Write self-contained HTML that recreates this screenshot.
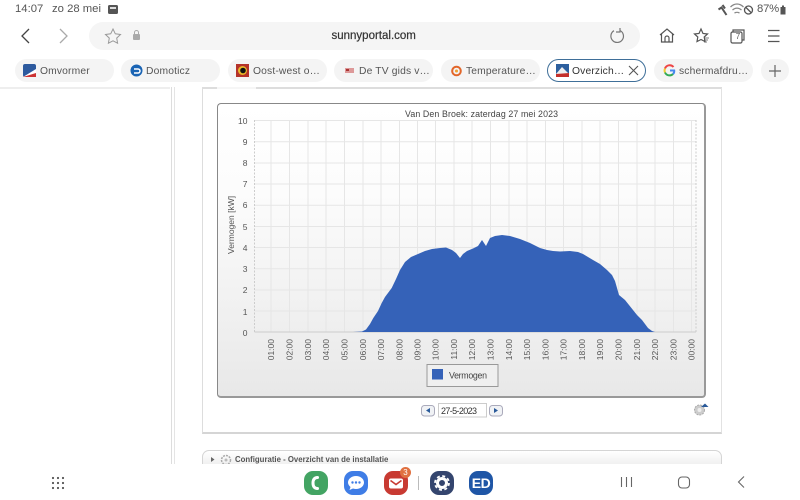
<!DOCTYPE html>
<html><head><meta charset="utf-8"><style>
html,body{margin:0;padding:0;width:800px;height:500px;overflow:hidden;background:#fff;font-family:"Liberation Sans",sans-serif;color:#444}
body{filter:blur(.3px)}
.a{position:absolute}
.tab{position:absolute;top:59px;width:99px;height:23px;border-radius:12px;background:#f4f4f4;font-size:10.300px;line-height:23px;color:#555;white-space:nowrap;box-sizing:border-box}
.tab span{position:absolute;left:25px;top:0;letter-spacing:.15px}
.tab svg{position:absolute;left:8px;top:5px}
.dock{position:absolute;top:471px;width:24px;height:24px;border-radius:9px}
</style></head><body>
<div class="a" style="left:15px;top:3px;font-size:11.300px;color:#555">14:07</div>
<div class="a" style="left:52px;top:3px;font-size:11.300px;color:#555">zo 28 mei</div>
<svg class="a" style="left:107px;top:3px" width="13" height="12"><rect x="1" y="2" width="10" height="9" rx="1.500" fill="#555"/><rect x="3" y="4" width="6" height="2" fill="#ddd"/></svg>
<svg class="a" style="left:716px;top:1px" width="84" height="16" fill="none" stroke="#555">
<path d="M2.500 8.500l3-2 5 7.500M6.500 4l2.500 3.500" stroke-width="2"/>
<path d="M14.500 6c4-4 9-4 13 0M16.500 9c3-2.500 6-2.500 9 0M18.500 12c2-1 3-1 5 0" stroke="#888" stroke-width="1.300"/>
<circle cx="32.500" cy="9" r="4" stroke-width="1.300"/><path d="M29.500 6l6 6" stroke-width="1.300"/>
<rect x="64.500" y="6" width="5" height="7.500" fill="#555" stroke="none"/><rect x="66" y="4.500" width="2" height="2" fill="#555" stroke="none"/></svg>
<div class="a" style="left:757px;top:3px;font-size:11.300px;color:#555;letter-spacing:-.2px">87%</div>

<svg class="a" style="left:18px;top:24px" width="60" height="24" fill="none"><path d="M11 5L4 12l7 7" stroke="#444" stroke-width="1.300"/><path d="M42 5l7 7-7 7" stroke="#aaa" stroke-width="1.300"/></svg>
<div class="a" style="left:89px;top:22px;width:551px;height:28px;border-radius:14px;background:#f5f5f5"></div>
<svg class="a" style="left:104px;top:27px" width="40" height="18" fill="none"><path d="M9 2l2.300 4.800 5.200.7-3.800 3.600.9 5.100L9 13.800 4.400 16.200l.9-5.100L1.500 7.500l5.200-.7z" stroke="#999"/><rect x="29" y="7" width="7" height="6" rx="1" fill="#aaa"/><path d="M30.500 7V5.500a2 2 0 014 0V7" stroke="#aaa"/></svg>
<div class="a" style="left:331.500px;top:22px;font-size:11.500px;line-height:28px;color:#333;-webkit-text-stroke:.2px #333;white-space:nowrap">sunnyportal.com</div>
<svg class="a" style="left:608px;top:27px" width="18" height="18" fill="none" stroke="#777" stroke-width="1.200"><path d="M12 3.500a6.300 6.300 0 11-6 .2"/><path d="M12 1v4H8"/></svg>
<svg class="a" style="left:658px;top:27px" width="122" height="18" fill="none" stroke="#555" stroke-width="1.200">
<path d="M2 8l7-6 7 6M3.500 7v8h11V7M7 15v-4a2 2 0 014 0v4"/>
<path d="M43 2l2 4.500 4.500.5-3.300 3 .8 4.500L43 12.500l-4 2 .8-4.500L36.500 7l4.500-.5z"/><path d="M46 11h5M46 13h4M46 15h3" stroke-width=".8"/>
<rect x="73" y="5" width="11" height="11" rx="1.500"/><path d="M75 5V3h11v10h-2"/>
<path d="M110 3.500h11.500M110 9h11.500M110 14.500h11.500"/></svg>
<div class="a" style="left:733px;top:32px;font-size:8px;color:#555;width:10px;text-align:center">7</div>

<div class="tab" style="left:15px"><svg width="13" height="13"><rect width="13" height="13" rx="2" fill="#2d5a9e"/><path d="M0 13L13 5v8z" fill="#fff"/><path d="M0 13l13-4v4z" fill="#c33"/></svg><span style="top:1px">Omvormer</span></div>
<div class="tab" style="left:121px"><svg style="left:9px" width="13" height="13"><circle cx="6.500" cy="6.500" r="6" fill="#1a64b4"/><path d="M4 5h4a2 2 0 010 4H4" stroke="#fff" fill="none" stroke-width="1.500"/></svg><span style="top:1px">Domoticz</span></div>
<div class="tab" style="left:228px"><svg width="13" height="13"><rect width="13" height="13" fill="#b5332a"/><circle cx="6.500" cy="6.500" r="4.500" fill="#e8b82a"/><circle cx="7" cy="6.500" r="2.800" fill="#111"/></svg><span style="top:1px">Oost-west o…</span></div>
<div class="tab" style="left:334px"><svg width="13" height="13" style="left:9px"><path d="M2 4h9v5H2z" fill="#d99"/><path d="M3 5h3v2H3z" fill="#a33"/></svg><span style="top:1px">De TV gids v…</span></div>
<div class="tab" style="left:441px"><svg style="left:9px" width="13" height="13" fill="none"><circle cx="6.500" cy="7" r="4.300" stroke="#e2662a" stroke-width="2"/><circle cx="6.500" cy="7" r="1.500" fill="#f0a030"/></svg><span style="top:1px">Temperature…</span></div>
<div class="tab" style="left:547px;background:#fff;border:1.200px solid #3f6f99;line-height:21px;color:#333"><svg style="left:8px;top:4px" width="13" height="13"><rect width="13" height="13" fill="#2c5f9e"/><path d="M0 10L6 3l7 7z" fill="#eee"/><path d="M0 13V10l13-1v4z" fill="#c4302b"/></svg><span style="left:24px;top:1px">Overzich…</span><svg style="left:80px;top:5px" width="11" height="11" fill="none" stroke="#555" stroke-width="1.100"><path d="M1 1l9 9M10 1l-9 9"/></svg></div>
<div class="tab" style="left:654px"><svg style="left:9px" width="13" height="13" fill="none" stroke-width="2"><path d="M10.500 3A5 5 0 002 4.500" stroke="#e44"/><path d="M2 4.500a5 5 0 000 4" stroke="#ec3"/><path d="M2 8.500a5 5 0 008 1.500" stroke="#3a5"/><path d="M10 10a4 4 0 001.200-3.500H7" stroke="#48e"/></svg><span style="top:1px">schermafdru…</span></div>
<div class="a" style="left:761px;top:59px;width:28px;height:23px;border-radius:12px;background:#f4f4f4"></div>
<svg class="a" style="left:768px;top:64px" width="14" height="14" stroke="#666" stroke-width="1.200"><path d="M7 1v12M1 7h12"/></svg>

<div class="a" style="left:0;top:87px;width:170px;height:1.500px;background:#eee"></div>
<div class="a" style="left:202px;top:87px;width:520px;height:1.500px;background:#ddd"></div>
<div class="a" style="left:217px;top:87px;width:39px;height:1.500px;background:#f6f6f6"></div>
<div class="a" style="left:171px;top:87px;width:4px;height:377px;border-left:1.500px solid #ddd;border-right:1.500px solid #e4e4e4;box-sizing:border-box"></div>
<div class="a" style="left:202px;top:88px;width:520px;height:346px;border-left:1px solid #ddd;border-right:1px solid #e2e2e2;border-bottom:2px solid #d5d5d5;box-sizing:border-box"></div>

<div class="a" style="left:217px;top:103px;width:489px;height:295px;box-sizing:border-box;border:1px solid #888;border-right:2px solid #999;border-bottom:2px solid #999;border-radius:4px;background:linear-gradient(#fff 0,#fcfcfc 30%,#e8e8e8 100%)"></div>
<svg class="a" style="left:0;top:0" width="800" height="500">
<g stroke="#e6e6e6" stroke-width="1">
<path d="M254.500 120.500H696M254.500 141.700H696M254.500 163H696M254.500 184H696M254.500 205.300H696M254.500 226.500H696M254.500 247.500H696M254.500 268.800H696M254.500 290H696M254.500 311H696"/>
<path d="M271 120V332M289.500 120V332M308 120V332M326 120V332M344.500 120V332M363 120V332M381 120V332M399.500 120V332M417.500 120V332M435.500 120V332M454 120V332M472 120V332M490.500 120V332M509 120V332M527 120V332M545.500 120V332M563.500 120V332M582 120V332M600 120V332M618.500 120V332M637 120V332M655 120V332M673.500 120V332M691.500 120V332"/>
</g>
<path d="M254.500 120V332M696 120V332" stroke="#ccc" stroke-dasharray="2 1.500" fill="none"/>
<path d="M254.500 332H696" stroke="#ccc"/>
<path d="M353 332L362 331.500 366 329.500 370 324 373.300 318 378 311 381.700 303 385 297 391.700 288 396 279 400 270 405 262 411 257 418 254 425 251 432 249 440 248 446 247.500 452 250 456 253 460 258 463 254 467 251 473 248.500 478 246 482 240 486 246 490 238 495 236 502 235 510 236 520 239 530 243 540 248 547 250 553 251 560 251.500 570 251 578 252 583 254 593 260 600 264 607 270 612 275 615 281 619 295 625 300 633 310 637 315 642 320 648 328 652 331 655 332Z" fill="#3562b8"/>
<g font-family="Liberation Sans,sans-serif" font-size="8.500" fill="#555" text-anchor="end">
<text x="247.500" y="124">10</text><text x="247.500" y="145">9</text><text x="247.500" y="166">8</text><text x="247.500" y="187">7</text><text x="247.500" y="208">6</text><text x="247.500" y="230">5</text><text x="247.500" y="251">4</text><text x="247.500" y="272">3</text><text x="247.500" y="293">2</text><text x="247.500" y="315">1</text><text x="247.500" y="336">0</text>
</g>
<text transform="translate(234,254) rotate(-90)" font-family="Liberation Sans,sans-serif" font-size="8.500" fill="#555">Vermogen [kW]</text>
<text x="405" y="117" font-family="Liberation Sans,sans-serif" font-size="8.800" fill="#444" textLength="153">Van Den Broek: zaterdag 27 mei 2023</text>
<g font-family="Liberation Sans,sans-serif" font-size="8.500" fill="#555" text-anchor="end">
<text transform="translate(274,339) rotate(-90)">01:00</text><text transform="translate(292.500,339) rotate(-90)">02:00</text><text transform="translate(311,339) rotate(-90)">03:00</text><text transform="translate(329,339) rotate(-90)">04:00</text><text transform="translate(347.500,339) rotate(-90)">05:00</text><text transform="translate(366,339) rotate(-90)">06:00</text><text transform="translate(384,339) rotate(-90)">07:00</text><text transform="translate(402.500,339) rotate(-90)">08:00</text><text transform="translate(420.500,339) rotate(-90)">09:00</text><text transform="translate(438.500,339) rotate(-90)">10:00</text><text transform="translate(457,339) rotate(-90)">11:00</text><text transform="translate(475,339) rotate(-90)">12:00</text><text transform="translate(493.500,339) rotate(-90)">13:00</text><text transform="translate(512,339) rotate(-90)">14:00</text><text transform="translate(530,339) rotate(-90)">15:00</text><text transform="translate(548.500,339) rotate(-90)">16:00</text><text transform="translate(566.500,339) rotate(-90)">17:00</text><text transform="translate(585,339) rotate(-90)">18:00</text><text transform="translate(603,339) rotate(-90)">19:00</text><text transform="translate(621.500,339) rotate(-90)">20:00</text><text transform="translate(640,339) rotate(-90)">21:00</text><text transform="translate(658,339) rotate(-90)">22:00</text><text transform="translate(676.500,339) rotate(-90)">23:00</text><text transform="translate(694.500,339) rotate(-90)">00:00</text>
</g>
<rect x="427" y="364.500" width="71" height="22" fill="#efefef" stroke="#999"/>
<rect x="432" y="369" width="11" height="10.500" fill="#3562b8"/>
<text x="449" y="378.500" font-family="Liberation Sans,sans-serif" font-size="8.800" fill="#444" textLength="38">Vermogen</text>
<rect x="421.500" y="405.500" width="13" height="10.500" rx="3" fill="#f0f2f5" stroke="#aab"/><path d="M430 408v5l-4-2.500z" fill="#2a5a9a"/>
<rect x="489.500" y="405.500" width="13" height="10.500" rx="3" fill="#f0f2f5" stroke="#aab"/><path d="M494 408v5l4-2.500z" fill="#2a5a9a"/>
<rect x="438.500" y="403.500" width="48" height="13.500" fill="#fff" stroke="#ccc"/>
<text x="441" y="414" font-family="Liberation Sans,sans-serif" font-size="9" fill="#333" textLength="36">27-5-2023</text>
<circle cx="699.500" cy="410" r="5" fill="#ccc" stroke="#aaa" stroke-dasharray="2 1"/><circle cx="699.500" cy="410" r="2" fill="#eee"/><path d="M701 407l4-3.500 3.500 3.500z" fill="#2a5a9a"/>
</svg>

<div class="a" style="left:202px;top:450px;width:520px;height:14px;box-sizing:border-box;border:1px solid #d5d5d5;border-bottom:0;border-radius:7px 7px 0 0;background:linear-gradient(#fff,#f0f0f0)"></div>
<svg class="a" style="left:208px;top:454px" width="26" height="11"><path d="M3 3v5l3.500-2.500z" fill="#666"/><circle cx="18" cy="6" r="4.500" fill="none" stroke="#aaa" stroke-width="1.500" stroke-dasharray="2 1"/><circle cx="18" cy="6" r="1.500" fill="#bbb"/></svg>
<div class="a" style="left:235px;top:455px;font-size:7.800px;font-weight:700;color:#555;white-space:nowrap">Configuratie - Overzicht van de installatie</div>

<div class="a" style="left:0;top:464px;width:800px;height:36px;background:#fff"></div>
<svg class="a" style="left:51px;top:476px" width="14" height="14" fill="#555"><circle cx="2" cy="2" r="1.100"/><circle cx="7" cy="2" r="1.100"/><circle cx="12" cy="2" r="1.100"/><circle cx="2" cy="7" r="1.100"/><circle cx="7" cy="7" r="1.100"/><circle cx="12" cy="7" r="1.100"/><circle cx="2" cy="12" r="1.100"/><circle cx="7" cy="12" r="1.100"/><circle cx="12" cy="12" r="1.100"/></svg>
<div class="dock" style="left:304px;background:#43a463"></div>
<svg class="a" style="left:304px;top:471px" width="24" height="24" fill="none"><path d="M13.500 6.500c-3 0-4.500 2-4.500 5.500s1.500 5.500 4.500 5.500" stroke="#fff" stroke-width="3" stroke-linecap="round"/></svg>
<div class="dock" style="left:344px;background:#3f7de6"></div>
<svg class="a" style="left:344px;top:471px" width="24" height="24"><path d="M12 5c4.500 0 8 3 8 6.500S16.500 18 12 18c-1 0-2-.2-3-.5L5.500 19l1-3C5 14.800 4 13.200 4 11.500 4 8 7.500 5 12 5z" fill="#fff"/><circle cx="8.500" cy="11.500" r="1.200" fill="#3f7de6"/><circle cx="12" cy="11.500" r="1.200" fill="#3f7de6"/><circle cx="15.500" cy="11.500" r="1.200" fill="#3f7de6"/></svg>
<div class="dock" style="left:384px;background:#c83a32"></div>
<svg class="a" style="left:384px;top:471px" width="24" height="24"><rect x="5" y="7.500" width="14" height="10" rx="2" fill="#fff"/><path d="M6.500 9.500l5.500 4 5.500-4" stroke="#c83a32" stroke-width="1.600" fill="none"/></svg>
<div class="a" style="left:400px;top:467px;width:11px;height:11px;border-radius:50%;background:#e07040;color:#fff;font-size:8px;line-height:11px;text-align:center">3</div>
<div class="a" style="left:418px;top:476px;width:1px;height:14px;background:#bbb"></div>
<div class="dock" style="left:430px;background:#34456e"></div>
<svg class="a" style="left:430px;top:471px" width="24" height="24" fill="none"><circle cx="12" cy="12" r="4.500" stroke="#fff" stroke-width="3"/><circle cx="12" cy="12" r="7" stroke="#fff" stroke-width="1.800" stroke-dasharray="3 2.500"/></svg>
<div class="dock" style="left:469px;background:#1f56a6"></div>
<div class="a" style="left:469px;top:471px;width:24px;height:24px;text-align:center;color:#fff;font-size:14px;font-weight:700;line-height:24px;letter-spacing:-.5px">ED</div>
<svg class="a" style="left:618px;top:474px" width="130" height="16" fill="none" stroke="#666" stroke-width="1.100"><path d="M3.500 3v10M8.500 3v10M13.500 3v10"/><rect x="60.500" y="3" width="11" height="11" rx="3.500"/><path d="M126 2.500L120.500 8l5.500 5.500"/></svg>
</body></html>
